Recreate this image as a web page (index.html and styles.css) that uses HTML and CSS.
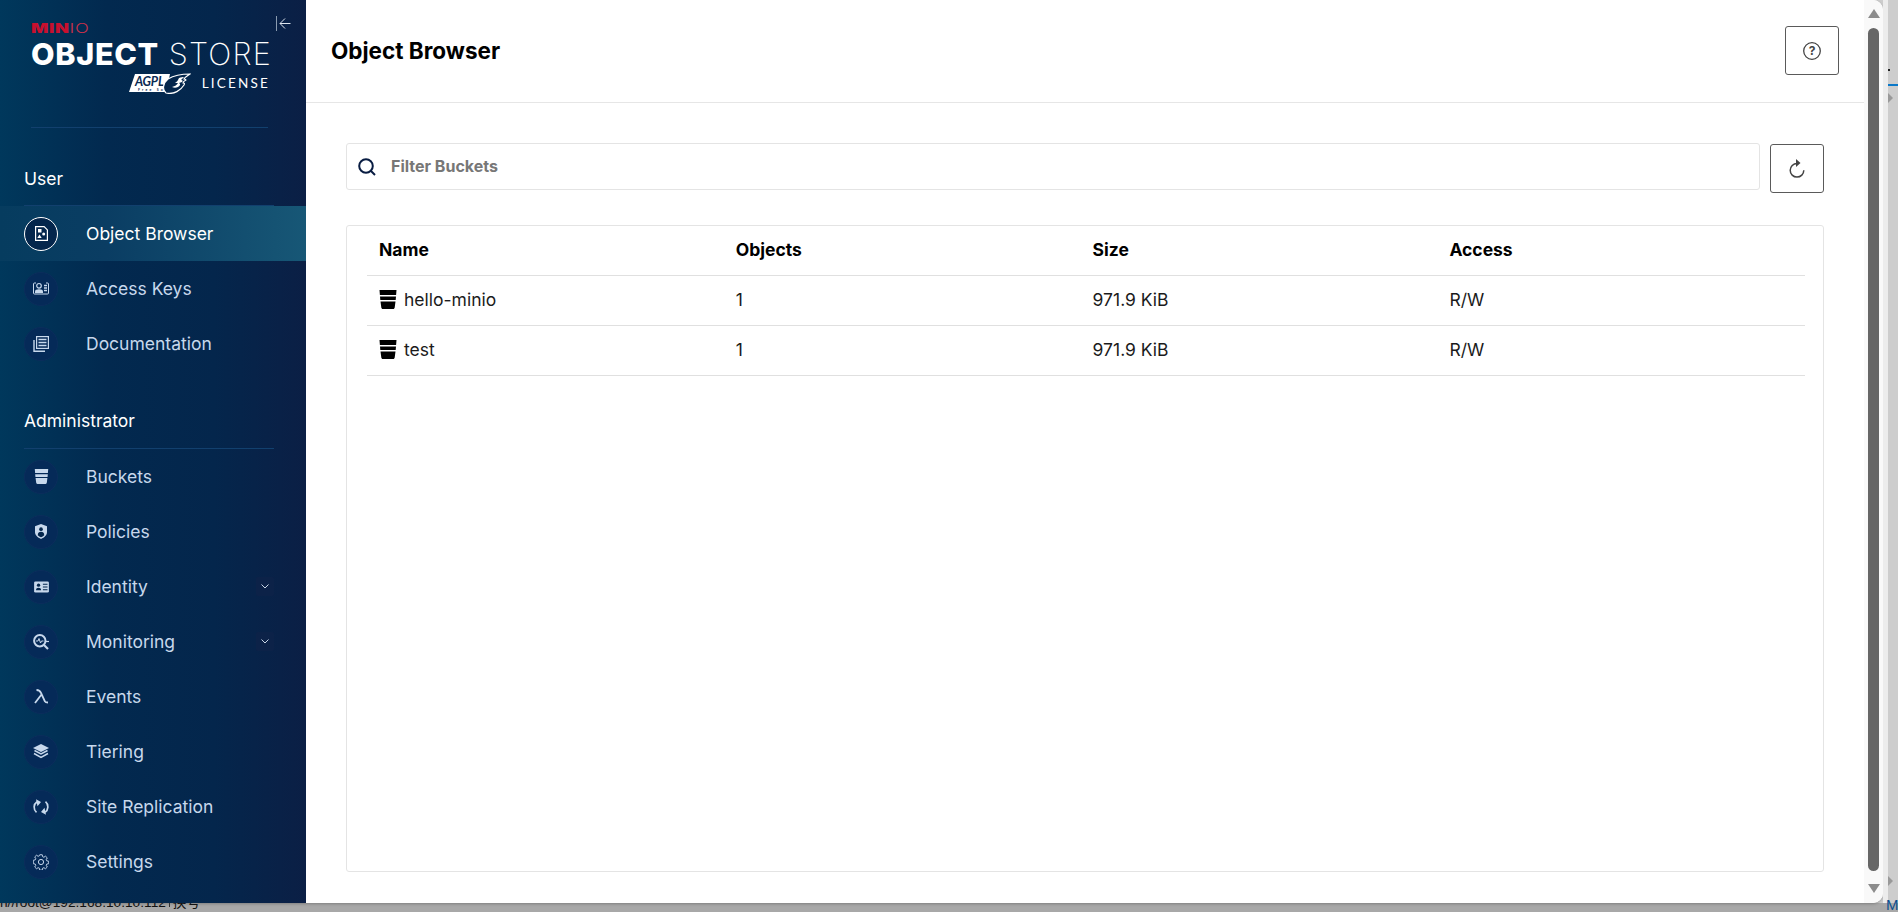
FILE: index.html
```html
<!DOCTYPE html>
<html lang="en">
<head>
<meta charset="utf-8">
<title>MinIO Console</title>
<link rel="stylesheet" href="styles.css">
</head>
<body>
<svg class="defs" width="0" height="0" aria-hidden="true">
  <symbol id="bucket" viewBox="0 0 18 19">
    <path d="M.5 0h17l-.4 5H.9zM1 6.500h16l-.3 3.500H1.300zM1.500 11.500h15l-.8 6c-.1.900-.7 1.500-1.500 1.500H3.800c-.8 0-1.400-.6-1.500-1.500z" fill="currentColor"/>
  </symbol>
</svg>
<div class="desktop">
  <div class="window">
    <aside class="sidebar">
      <div class="brand">
        <div class="logo">
          <div class="logo-minio"><span class="m-red">MIN</span><span class="m-thin">IO</span></div>
          <div class="logo-title"><b>OBJECT</b> <span>STORE</span></div>
          <div class="logo-license">
            <svg class="agpl" width="62" height="21" viewBox="0 0 62 21">
              <path d="M6 1h35l-4 18H0z" fill="#fff"/>
              <text x="6" y="13" class="agpl-text">AGPL</text>
              <text x="9" y="18.200" class="agpl-small">Free Software</text>
              <path d="M37 20c-4-3-3-10 2-14 5-3 13-5 22-5-3 2-5 3-6 5 1 0 2 0 2 1-2 1-3 2-3 3 1 0 2 0 1 2-3 5-10 10-18 8z" fill="#04264c" stroke="#fff" stroke-width="1.200"/>
              <path d="M50 5c2-1 4-1 5-1l-3 3c2 0 2 1 1 2l-3 1c2 1 1 3-1 4-2 1-4 1-6 0 3-1 5-2 6-4h-3c2-1 3-3 4-5z" fill="#fff"/>
            </svg>
            <span>LICENSE</span>
          </div>
        </div>
        <button class="collapse" aria-label="Collapse">
          <svg width="15" height="15" viewBox="0 0 15 15"><path d="M.5 0v15" stroke="#8a9bb0" fill="none"/><path d="M14.500 7.500H4M9 2.500l-5 5 5 5" stroke="#dfe6ee" stroke-width="1" fill="none"/></svg>
        </button>
      </div>
      <div class="brand-rule"></div>

      <div class="group-label user-label">User</div>
      <a class="item active">
        <span class="ico"><svg width="13" height="15" viewBox="0 0 13 15"><path d="M.6.6h8.500l3.300 3.300v10.500H.6z" fill="none" stroke="#fff" stroke-width="1.200"/><rect x="3" y="3" width="3.500" height="3.500" fill="#fff"/><circle cx="8.700" cy="8" r="1.500" fill="#fff"/><path d="M4.500 8.500l2.200 3.500H2.300z" fill="#fff"/></svg></span>
        <span class="lbl">Object Browser</span>
      </a>
      <a class="item">
        <span class="ico"><svg width="16" height="13" viewBox="0 0 16 13"><path d="M3 1H1.500a1 1 0 0 0-1 1v9a1 1 0 0 0 1 1h13a1 1 0 0 0 1-1V2a1 1 0 0 0-1-1H13" fill="none" stroke="currentColor" stroke-width="1"/><circle cx="6" cy="3.800" r="2.300" fill="none" stroke="currentColor" stroke-width="1.200"/><path d="M2 11V9.500C2 8 3.500 7.300 6 7.300s4 .7 4 2.200V11z" fill="currentColor"/><path d="M11 3.500h3M11 6h3M11 8.500h3" stroke="currentColor" stroke-width="1.400"/></svg></span>
        <span class="lbl">Access Keys</span>
      </a>
      <a class="item">
        <span class="ico"><svg width="16" height="16" viewBox="0 0 16 16"><rect x="3.600" y=".6" width="11.800" height="11.800" fill="none" stroke="currentColor" stroke-width="1.200"/><path d="M5.500 3.500h8M5.500 6.500h8M5.500 9.500h8" stroke="currentColor" stroke-width="1.400"/><path d="M1 4v11.300h11" fill="none" stroke="currentColor" stroke-width="1.400"/></svg></span>
        <span class="lbl">Documentation</span>
      </a>

      <div class="group-label admin-label">Administrator</div>
      <a class="item">
        <span class="ico"><svg class="i-bucket" width="15" height="15"><use href="#bucket"/></svg></span>
        <span class="lbl">Buckets</span>
      </a>
      <a class="item">
        <span class="ico"><svg width="12" height="15" viewBox="0 0 13 16"><path d="M6.500 0 13 2.200v6.300c0 3.400-2.800 6-6.500 7.500C2.800 14.500 0 11.900 0 8.500V2.200z" fill="currentColor"/><circle cx="6.500" cy="5.500" r="2" fill="#04264c"/><path d="M3 12c0-2.500 1.500-3.600 3.500-3.600S10 9.500 10 12c-1 1-2.300 1.800-3.500 2.300C5.300 13.800 4 13 3 12z" fill="#04264c"/></svg></span>
        <span class="lbl">Policies</span>
      </a>
      <a class="item">
        <span class="ico"><svg width="15" height="12" viewBox="0 0 16 13"><rect y=".5" width="16" height="12" rx="1.500" fill="currentColor"/><circle cx="4.800" cy="4.500" r="1.800" fill="#04264c"/><path d="M2 10c0-2 1.200-2.800 2.800-2.800S7.600 8 7.600 10z" fill="#04264c"/><path d="M9.500 3.500h5M9.500 6.500h5M9.500 9.500h5" stroke="#04264c" stroke-width="1.300"/></svg></span>
        <span class="lbl">Identity</span>
        <span class="chev"><svg width="8" height="5" viewBox="0 0 8 5"><path d="M.5.500 4 4 7.500.5" fill="none" stroke="#c9d6e6"/></svg></span>
      </a>
      <a class="item">
        <span class="ico"><svg width="16" height="16" viewBox="0 0 16 16"><circle cx="6.800" cy="6.800" r="5.700" fill="none" stroke="currentColor" stroke-width="2"/><path d="M3 7h2l1-2.500L7.500 9l1-2h2" fill="none" stroke="currentColor"/><path d="M11 11l4 4" stroke="currentColor" stroke-width="2.200"/><path d="M12 7.500h4" stroke="currentColor" stroke-width="1.200"/></svg></span>
        <span class="lbl">Monitoring</span>
        <span class="chev"><svg width="8" height="5" viewBox="0 0 8 5"><path d="M.5.500 4 4 7.500.5" fill="none" stroke="#c9d6e6"/></svg></span>
      </a>
      <a class="item">
        <span class="ico"><svg width="15" height="15" viewBox="0 0 15 15"><path d="M2.500 1C5 1 6 1.500 7 4l4 8.500c.3.700.9 1 3 1M7.500 5.500 1 14" fill="none" stroke="currentColor" stroke-width="1.800"/></svg></span>
        <span class="lbl">Events</span>
      </a>
      <a class="item">
        <span class="ico"><svg width="16" height="15" viewBox="0 0 16 15"><path d="M8 0l8 4-8 4-8-4z" fill="currentColor"/><path d="M1.500 6.500 8 10l6.500-3.500M1 9.500 8 13.500l7-4" fill="none" stroke="currentColor" stroke-width="1.500"/></svg></span>
        <span class="lbl">Tiering</span>
      </a>
      <a class="item">
        <span class="ico"><svg width="16" height="16" viewBox="0 0 16 16"><path d="M3.500 13.300A6.700 6.700 0 0 1 4 2.700M12.500 2.700a6.700 6.700 0 0 1-.5 10.600" fill="none" stroke="currentColor" stroke-width="1.700"/><path d="M3 .2 8 3 4.500 7.300zM13 15.800 8 13l3.500-4.300z" fill="currentColor"/></svg></span>
        <span class="lbl">Site Replication</span>
      </a>
      <a class="item">
        <span class="ico"><svg width="16" height="16" viewBox="0 0 16 16"><path d="M6.700.7h2.600l.4 2 1.300.6 1.800-1.100 1.800 1.800-1.100 1.800.6 1.300 2 .4v2.600l-2 .4-.6 1.300 1.100 1.800-1.800 1.800-1.800-1.100-1.300.6-.4 2H6.700l-.4-2-1.300-.6-1.800 1.100-1.800-1.800 1.100-1.800-.6-1.300-2-.4V6.500l2-.4.6-1.300L1.400 3l1.800-1.800L5 2.300l1.300-.6z" fill="none" stroke="currentColor" stroke-width="1" transform="translate(.4 .1) scale(.95)"/><circle cx="8" cy="8" r="2.600" fill="none" stroke="currentColor"/></svg></span>
        <span class="lbl">Settings</span>
      </a>
    </aside>

    <main class="main">
      <header class="topbar">
        <h1>Object Browser</h1>
        <button class="square" aria-label="Help">
          <svg width="18" height="18" viewBox="0 0 18 18"><circle cx="9" cy="9" r="8.300" fill="none" stroke="#444" stroke-width="1.300"/><text x="9" y="13.300" class="qmark">?</text></svg>
        </button>
      </header>
      <div class="content">
        <div class="filter-row">
          <label class="search">
            <svg width="18" height="18" viewBox="0 0 18 18"><circle cx="8" cy="8" r="6.800" fill="none" stroke="#081c42" stroke-width="2"/><path d="M12.500 12.500 17 17" stroke="#081c42" stroke-width="2"/></svg>
            <span>Filter Buckets</span>
          </label>
          <button class="square refresh" aria-label="Refresh">
            <svg width="16" height="19" viewBox="0 0 16 19"><path d="M8 4.500A6.800 6.800 0 1 0 14.800 11.300" fill="none" stroke="#444" stroke-width="1.500"/><path d="M7 0 11.500 4 7 8z" fill="#444"/></svg>
          </button>
        </div>
        <section class="card">
          <div class="row head">
            <div class="cell">Name</div><div class="cell">Objects</div><div class="cell">Size</div><div class="cell">Access</div>
          </div>
          <div class="row">
            <div class="cell name"><svg width="18" height="19"><use href="#bucket"/></svg>hello-minio</div><div class="cell">1</div><div class="cell">971.9 KiB</div><div class="cell">R/W</div>
          </div>
          <div class="row">
            <div class="cell name"><svg width="18" height="19"><use href="#bucket"/></svg>test</div><div class="cell">1</div><div class="cell">971.9 KiB</div><div class="cell">R/W</div>
          </div>
        </section>
      </div>
    </main>

    <div class="scroll">
      <span class="arrow up"></span>
      <span class="thumb"></span>
      <span class="arrow down"></span>
    </div>
  </div>

  <div class="side-strip">
    <span class="tick"></span>
    <span class="blue"></span>
    <span class="tri"></span>
    <span class="tri low"></span>
    <span class="corner-m">M</span>
  </div>
</div>
<div class="taskbar"><span>n//root@192.168.10.10:112</span><span class="sep">换号</span></div>
</body>
</html>
```

FILE: styles.css
```css
* { box-sizing: border-box; }
html, body { margin: 0; height: 912px; overflow: hidden; background: #cdcdcd; }
body { font-family: Inter, "Liberation Sans", sans-serif; color: #000; }
.defs { position: absolute; }
.desktop { display: flex; height: 903px; }

.window { width: 1883px; flex: none; display: flex; height: 903px; border-radius: 0 10px 10px 0; overflow: hidden; box-shadow: 0 1px 3px rgba(0,0,0,.25); background: #fff; position: relative; }

/* sidebar */
.sidebar { width: 306px; flex: none; background: linear-gradient(90deg, #00385c 0%, #02294f 35%, #04264c 70%, #0b1f45 100%); display: flex; flex-direction: column; }
.brand { height: 93px; padding: 24px 0 0 31px; display: flex; justify-content: space-between; }
.logo { width: 237px; color: #fff; }
.logo-minio { font: 900 12.500px/10px Inter, sans-serif; letter-spacing: .4px; height: 10px; transform: scaleX(1.46); transform-origin: left center; }
.m-red { color: #c8102e; }
.m-thin { color: #c8304a; font-weight: 300; }
.logo-title { font: 200 30.500px/32px Inter, sans-serif; white-space: nowrap; margin-top: 4px; letter-spacing: 1.200px; }
.logo-title b { font-weight: 800; letter-spacing: .7px; }
.logo-license { display: flex; align-items: center; justify-content: flex-end; gap: 11px; height: 22px; margin-top: 2px; font: 400 13.500px/22px Lato, sans-serif; letter-spacing: 2.200px; margin-right: -2px; }
.agpl { flex: none; }
.agpl-text { font: italic 700 12.500px Lato, sans-serif; fill: #0a2a52; letter-spacing: -.2px; }
.agpl-small { font: 700 3.500px Lato, sans-serif; fill: #0a2a52; }
.collapse { background: none; border: 0; padding: 0; width: 15px; height: 15px; margin: -8px 15px 0 0; display: block; line-height: 0; }
.brand-rule { height: 1px; background: #12406e; margin: 34px 38px 0 31px; flex: none; }

.group-label { color: #fff; font-size: 17.500px; font-weight: 400; margin-left: 24px; width: 250px; flex: none; border-bottom: 1px solid #12406e; }
.user-label { margin-top: 40px; height: 38px; line-height: 22px; }
.admin-label { margin-top: 39px; height: 39px; line-height: 22px; }

.item { height: 55px; flex: none; display: flex; align-items: center; color: #c7d8ec; padding-left: 24px; padding-right: 32px; font-size: 17.500px; }
.item.active { background: linear-gradient(90deg, #063c5f 0%, #0a3d63 35%, #175776 100%); color: #fff; }
.ico { width: 34px; height: 34px; border-radius: 50%; background: #052a58; border: 1px solid #0b2d5c; display: flex; align-items: center; justify-content: center; flex: none; color: #c7d8ec; }
.active .ico { border: 1px solid #fff; background: #04264c; color: #fff; }
.i-bucket { color: #c7d8ec; }
.lbl { margin-left: 28px; flex: 1; white-space: nowrap; }
.chev { width: 18px; height: 19px; border-radius: 2px; background: #0c2248; display: flex; align-items: center; justify-content: center; }

/* main */
.main { flex: 1; min-width: 0; display: flex; flex-direction: column; }
.topbar { height: 103px; flex: none; border-bottom: 1px solid #e6e6e6; display: flex; align-items: center; justify-content: space-between; padding: 0 25px 1px 25px; }
.topbar h1 { margin: 0; font-size: 22.500px; font-weight: 700; line-height: 24px; letter-spacing: 0; }
.square { width: 54px; height: 49px; padding: 0; border: 1px solid #5a5a5a; border-radius: 3px; background: #fff; display: flex; align-items: center; justify-content: center; flex: none; }
.refresh { margin-top: 1px; }
.qmark { font: 700 12px Inter, sans-serif; fill: #444; text-anchor: middle; }
.content { padding: 40px 40px 0 40px; flex: 1; min-height: 0; }
.filter-row { display: flex; gap: 10px; align-items: flex-start; height: 50px; }
.search { flex: 1; height: 47px; border: 1px solid #e4e4e4; border-radius: 3px; display: flex; align-items: center; padding-left: 11px; color: #777; font-size: 16px; font-weight: 700; }
.search span { margin: 0 0 2px 15px; }
.card { margin-top: 32px; height: 647px; border: 1px solid #e4e4e4; border-radius: 3px; padding: 0 18px 0 20px; }
.row { display: grid; grid-template-columns: repeat(4, 356.800px); height: 50px; border-bottom: 1px solid #e0e0e0; align-items: center; padding: 0 0 3px 12px; font-size: 17.500px; color: #1b1b1b; }
.row.head { font-weight: 700; color: #000; padding-bottom: 2px; }
.cell.name { display: flex; align-items: center; gap: 7px; }
.cell.name svg { flex: none; color: #000; }

/* scrollbar */
.scroll { width: 19px; flex: none; background: #f9f9f9; position: relative; display: flex; flex-direction: column; align-items: center; padding-top: 9px; }
.arrow { width: 0; height: 0; border-left: 6px solid transparent; border-right: 6px solid transparent; flex: none; }
.arrow.up { border-bottom: 9px solid #8c8c8c; }
.arrow.down { border-top: 9px solid #8c8c8c; margin-top: 13px; }
.thumb { width: 11px; height: 843px; border-radius: 6px; background: #666; margin-top: 10px; flex: none; }

/* neighbouring window at the right edge */
.side-strip { flex: 1; position: relative; background: #cdcdcd; border-left: 5px solid #ececec; }
.tick { position: absolute; left: 0; top: 69px; width: 2px; height: 2px; background: #222; }
.blue { position: absolute; left: 0; right: 0; top: 84px; height: 2px; background: #0a78c8; }
.tri { position: absolute; left: 0; top: 93px; width: 0; height: 0; border-left: 5px solid #999; border-top: 5px solid transparent; border-bottom: 5px solid transparent; }
.tri.low { top: 876px; }
.corner-m { position: absolute; left: -2px; bottom: -9px; font: 15px/15px "Liberation Sans", sans-serif; color: #0a4f90; }

.taskbar { height: 9px; background: #a8a8a8; overflow: hidden; font: 13.700px/9px "Liberation Sans", "Noto Sans CJK SC", sans-serif; color: #111; white-space: nowrap; }
.taskbar span { display: inline-block; position: relative; top: -5px; }
.taskbar .sep { border-left: 1px solid #333; padding-left: 3px; margin-left: 3px; }
```
